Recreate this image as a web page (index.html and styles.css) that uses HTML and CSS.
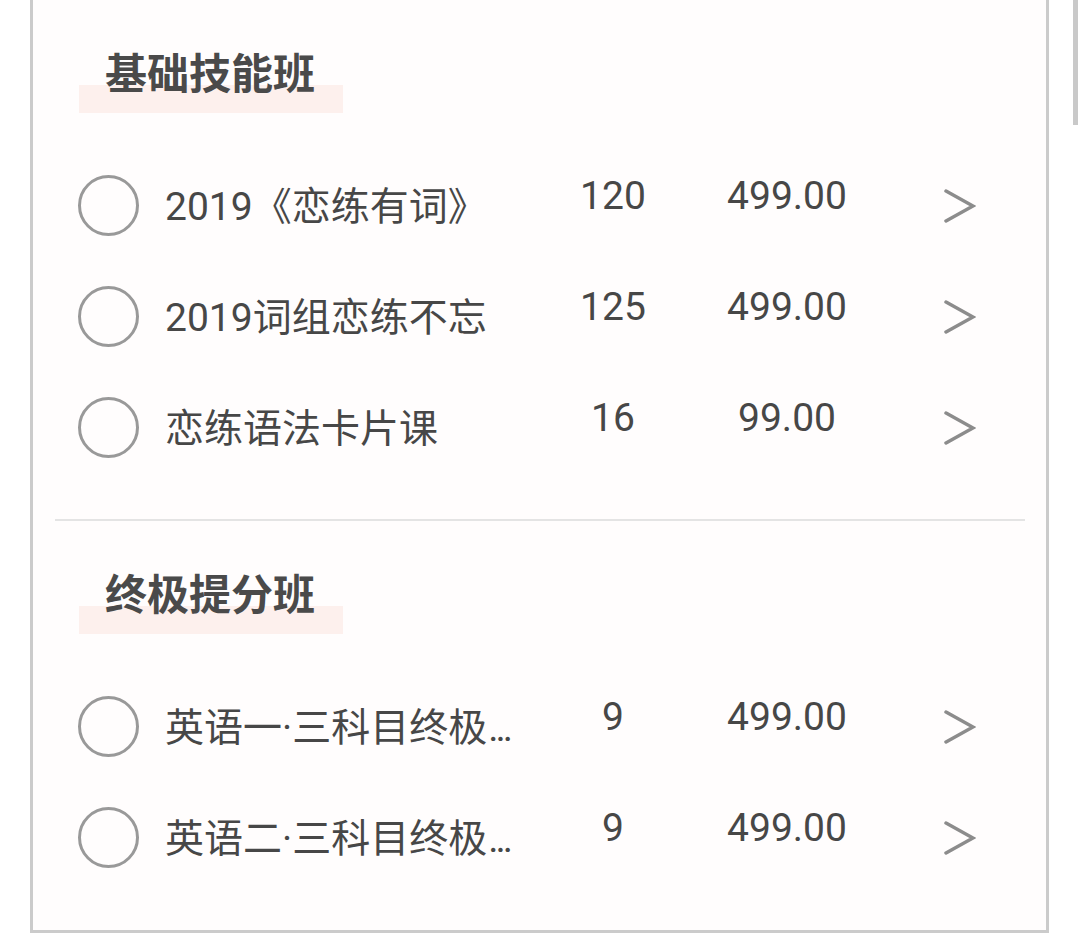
FILE: index.html
```html
<!DOCTYPE html>
<html lang="zh-CN">
<head>
    <meta charset="UTF-8">
    <meta name="viewport" content="width=device-width, initial-scale=1.0">
    <title>课程选择</title>
    <link rel="stylesheet" href="styles.css">
</head>
<body>
    <div class="card">
        <div class="section">
            <div class="section-title">基础技能班</div>
            <div class="row">
                <span class="radio"></span>
                <span class="name">2019《恋练有词》</span>
                <span class="count">120</span>
                <span class="price">499.00</span>
                <svg class="chevron" width="32" height="34" viewBox="0 0 32 34"><polyline points="2,2 29,17 2,32" /></svg>
            </div>
            <div class="row">
                <span class="radio"></span>
                <span class="name">2019词组恋练不忘</span>
                <span class="count">125</span>
                <span class="price">499.00</span>
                <svg class="chevron" width="32" height="34" viewBox="0 0 32 34"><polyline points="2,2 29,17 2,32" /></svg>
            </div>
            <div class="row">
                <span class="radio"></span>
                <span class="name">恋练语法卡片课</span>
                <span class="count">16</span>
                <span class="price">99.00</span>
                <svg class="chevron" width="32" height="34" viewBox="0 0 32 34"><polyline points="2,2 29,17 2,32" /></svg>
            </div>
        </div>

        <hr class="divider">

        <div class="section">
            <div class="section-title">终极提分班</div>
            <div class="row">
                <span class="radio"></span>
                <span class="name">英语一·三科目终极<span class="dots">...</span></span>
                <span class="count">9</span>
                <span class="price">499.00</span>
                <svg class="chevron" width="32" height="34" viewBox="0 0 32 34"><polyline points="2,2 29,17 2,32" /></svg>
            </div>
            <div class="row">
                <span class="radio"></span>
                <span class="name">英语二·三科目终极<span class="dots">...</span></span>
                <span class="count">9</span>
                <span class="price">499.00</span>
                <svg class="chevron" width="32" height="34" viewBox="0 0 32 34"><polyline points="2,2 29,17 2,32" /></svg>
            </div>
        </div>
    </div>

    <div class="scrollbar"></div>
</body>
</html>
```

FILE: styles.css
```css
html, body { margin: 0; padding: 0; background: #fff; overflow: hidden; }
body { font-family: Roboto, "Noto Sans CJK SC", sans-serif; color: #474747; height: 933px; }

.card { margin-left: 30px; width: 1019px; height: 933px; box-sizing: border-box; border: 3px solid #cbcbcb; border-top: none; background: #fffdfd; }

.section { padding-top: 50px; }
.section-title {
    width: 264px; box-sizing: border-box; margin-left: 46px;
    padding: 0 0 13px 26px;
    font-size: 42px; font-weight: bold; line-height: 50px; color: #4a4a4a;
    background: linear-gradient(to bottom, transparent 35px, #fdf0ed 35px);
}

.row { display: flex; align-items: center; height: 111px; padding-left: 45px; }
.section-title + .row { margin-top: 37px; }

.radio { width: 61px; height: 61px; box-sizing: border-box; border: 3.5px solid #999; border-radius: 50%; flex-shrink: 0; }
.name { width: 350px; margin-left: 26px; font-size: 39px; white-space: nowrap; padding-bottom: 6px; }
.dots { letter-spacing: -3px; margin-left: 1px; }
.count { width: 196px; text-align: center; font-size: 39px; padding-bottom: 20px; }
.price { width: 152px; text-align: center; font-size: 39px; padding-bottom: 20px; }
.chevron { margin-left: 81px; fill: none; stroke: #8c8c8c; stroke-width: 3.5; stroke-linecap: round; stroke-linejoin: miter; }

.divider { margin: 36px 21px 0 22px; border: none; height: 2px; background: #e4e4e4; }

.scrollbar { position: absolute; top: 0; left: 1073px; width: 5px; height: 125px; background: #c9c9c9; }
```
